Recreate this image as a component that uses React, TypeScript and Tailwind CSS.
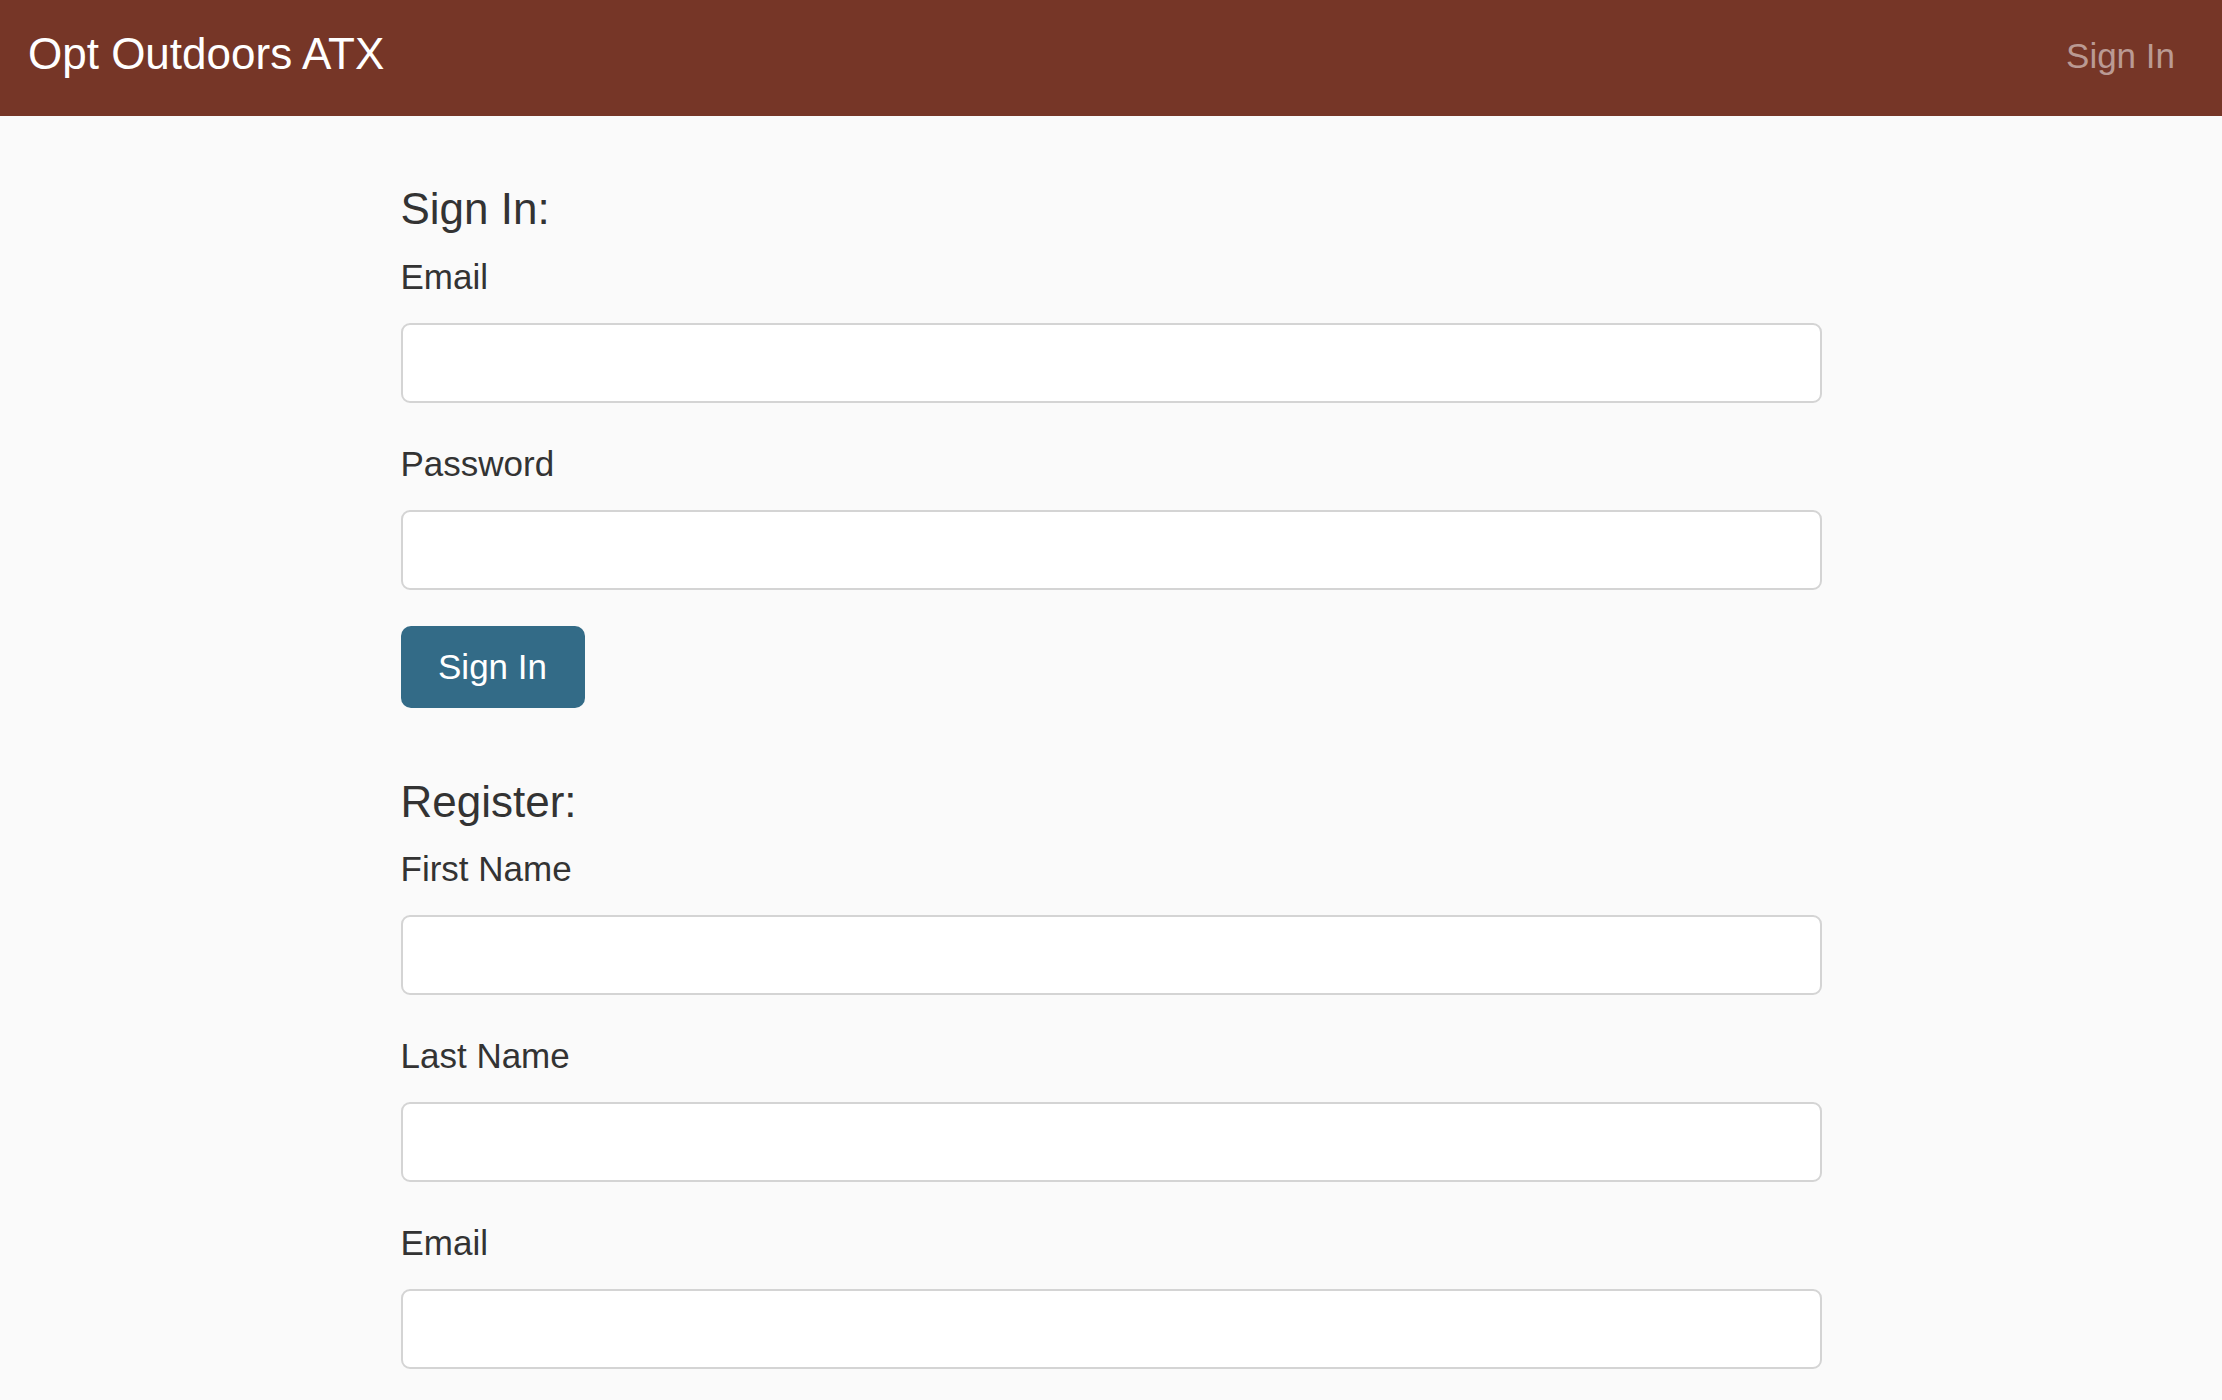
import React from "react";

const font = { fontFamily: '"Liberation Sans", Arial, Helvetica, sans-serif' };

function Field({ label, type = "text" }: { label: string; type?: string }) {
  return (
    <div className="mb-[36px]">
      <label className="block text-[35px] leading-[50px] text-[#333333] mb-[21px]">{label}</label>
      <input
        type={type}
        className="block w-full h-[80px] bg-white border-2 border-[#d4d4d4] rounded-[9px] px-[20px] text-[35px] outline-none"
      />
    </div>
  );
}

export default function App() {
  return (
    <div className="h-screen overflow-hidden bg-[#fafafa]" style={font}>
      <header className="h-[116px] bg-[#763627] flex justify-between items-start pl-[28px] pr-[47px]">
        <a className="mt-[32px] text-[44px] leading-[44px] text-white">Opt Outdoors ATX</a>
        <a className="mt-[38px] text-[35px] leading-[35px] text-[#ba9a93]">Sign In</a>
      </header>
      <main className="w-[1421px] mx-auto pt-[69px]">
        <h3 className="text-[44px] leading-[47px] text-[#333333] mb-[20px]">Sign In:</h3>
        <Field label="Email" type="email" />
        <Field label="Password" type="password" />
        <button className="w-[184px] h-[82px] bg-[#336b87] text-white text-[35px] rounded-[10px] mb-[70px]">
          Sign In
        </button>
        <h3 className="text-[44px] leading-[47px] text-[#333333] mb-[19px]">Register:</h3>
        <Field label="First Name" />
        <Field label="Last Name" />
        <Field label="Email" type="email" />
      </main>
    </div>
  );
}
